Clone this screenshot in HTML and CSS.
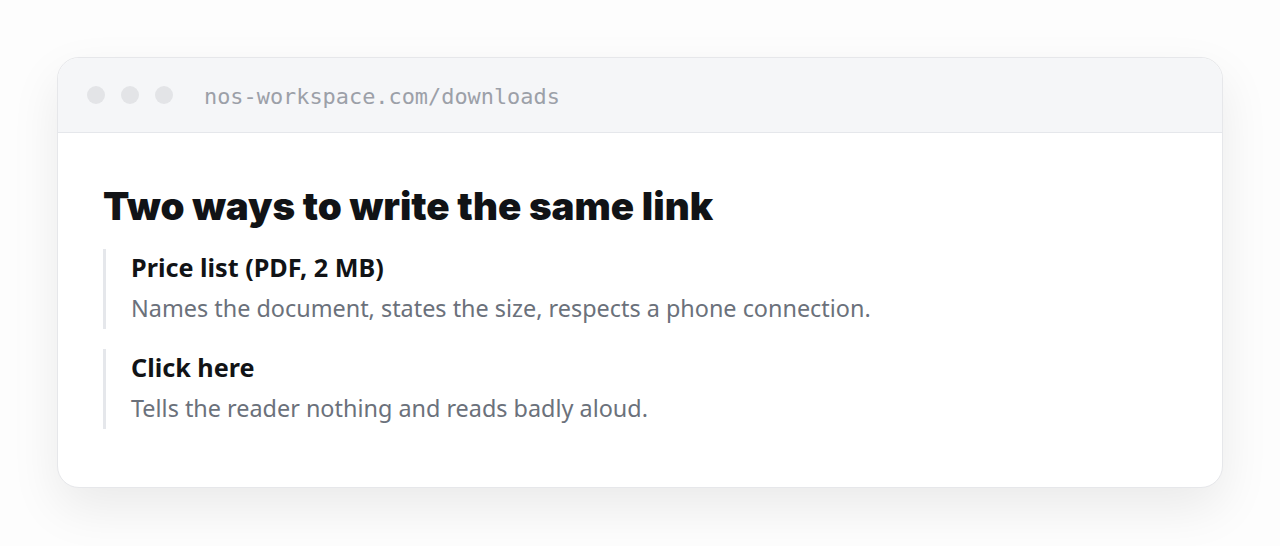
FILE: index.html
```html
<!DOCTYPE html>
<html lang="en">
<head>
<meta charset="utf-8">
<link rel="stylesheet" href="styles.css">
<title>Downloads</title>
</head>
<body>
<div class="stage">
  <div class="window">
    <div class="titlebar">
      <div class="dots"><span class="dot"></span><span class="dot"></span><span class="dot"></span></div>
      <div class="url">nos-workspace.com/downloads</div>
    </div>
    <div class="content">
      <h1 class="heading">Two ways to write the same link</h1>
      <div class="items">
        <div class="item">
          <div class="item-title">Price list (PDF, 2 MB)</div>
          <div class="item-desc">Names the document, states the size, respects a phone connection.</div>
        </div>
        <div class="item">
          <div class="item-title">Click here</div>
          <div class="item-desc">Tells the reader nothing and reads badly aloud.</div>
        </div>
      </div>
    </div>
  </div>
</div>
</body>
</html>
```
FILE: styles.css
```css
html, body {
  margin: 0;
  padding: 0;
  background: #fdfdfd;
}
.stage {
  padding: 57px 57px 0 57px;
  height: 546px;
  box-sizing: border-box;
}
.window {
  width: 1166px;
  height: 431px;
  box-sizing: border-box;
  border: 1px solid #e6e7ea;
  border-radius: 22px;
  background: #ffffff;
  overflow: hidden;
  box-shadow: 0 20px 50px rgba(0, 0, 0, 0.08);
}
.titlebar {
  height: 75px;
  box-sizing: border-box;
  background: #f5f6f8;
  border-bottom: 1px solid #e5e7eb;
  display: flex;
  align-items: center;
  padding-left: 29px;
}
.dots {
  display: flex;
  gap: 16px;
}
.dot {
  width: 18px;
  height: 18px;
  border-radius: 50%;
  background: #e3e4e7;
}
.url {
  margin-left: 31px;
  font-family: "DejaVu Sans Mono", monospace;
  font-size: 21.9px;
  color: #9ca0a8;
  padding-top: 2px;
}
.content {
  padding: 50px 45px 0 45px;
  font-family: "Noto Sans", sans-serif;
}
.heading {
  margin: 0 0 20px 0;
  font-family: "Inter", sans-serif;
  font-weight: 900;
  font-size: 38.5px;
  line-height: 46px;
  color: #111316;
  letter-spacing: 0;
}
.items {
  display: flex;
  flex-direction: column;
  gap: 20px;
}
.item {
  border-left: 3px solid #e5e7eb;
  padding-left: 25px;
  height: 80px;
  box-sizing: border-box;
}
.item-title {
  font-weight: 700;
  font-size: 25.2px;
  line-height: 38px;
  color: #111316;
  margin-top: -1px;
}
.item-desc {
  font-size: 23.4px;
  line-height: 44px;
  color: #6b717b;
}
```
